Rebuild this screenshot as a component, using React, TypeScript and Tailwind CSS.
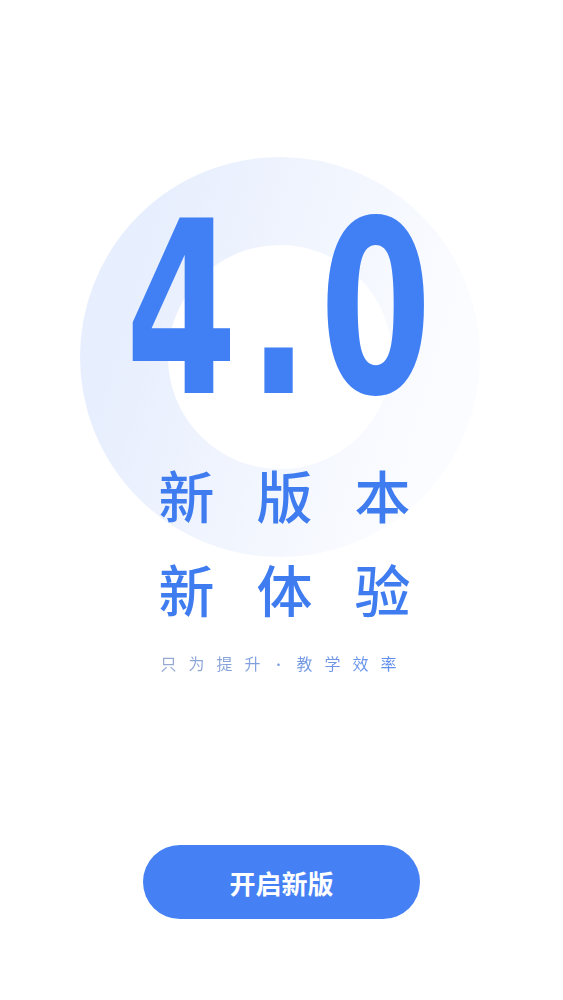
import React from 'react';

// 背景圆环：左侧偏蓝，向右渐隐
const Ring: React.FC = () => (
  <svg className="absolute left-[80px] top-[157px]" width="400" height="400" viewBox="0 0 400 400">
    <defs>
      <linearGradient id="ringGrad" x1="0" y1="0.35" x2="1" y2="0.65">
        <stop offset="0" stopColor="#e7eefd" />
        <stop offset="0.55" stopColor="#f2f6fe" />
        <stop offset="1" stopColor="#fbfcff" />
      </linearGradient>
    </defs>
    <circle cx="200" cy="200" r="156" fill="none" stroke="url(#ringGrad)" strokeWidth="88" />
  </svg>
);

const App: React.FC = () => {
  return (
    <div
      className="relative w-full h-[1000px] bg-white overflow-hidden"
      style={{ fontFamily: '"Noto Sans CJK SC", "Liberation Sans", sans-serif' }}
    >
      <Ring />

      <div className="relative flex flex-col items-center pt-[190px]">
        {/* 4.0 */}
        <div className="h-[240px] w-[310px] flex justify-center pr-[6px]">
          <span
            className="block h-[240px] leading-[240px] text-[240px] font-bold text-[#4080f4] whitespace-nowrap tracking-[16px] pl-[16px] scale-x-[0.67] origin-center"
            style={{ fontFamily: '"DejaVu Sans", sans-serif' }}
          >
            4.0
          </span>
        </div>

        {/* 新版本 / 新体验 */}
        <div className="mt-[36px] flex flex-col items-center gap-[38px] text-[56px] leading-[56px] font-medium text-[#3f7cf0]">
          <div className="flex gap-[42px] pl-[6px]">
            <span>新</span>
            <span>版</span>
            <span>本</span>
          </div>
          <div className="flex gap-[42px] pl-[6px]">
            <span>新</span>
            <span>体</span>
            <span>验</span>
          </div>
        </div>

        {/* 副标题 */}
        <div className="mt-[37px] text-[16px] leading-[20px] tracking-[12px] pl-[6px] bg-gradient-to-r from-[#97aad0] to-[#5b8cf0] bg-clip-text text-transparent">
          只为提升<span className="text-[12px]">·</span>教学效率
        </div>

        {/* 按钮 */}
        <button className="mt-[170px] w-[277px] h-[74px] rounded-full bg-[#4581f5] text-white text-[26px] font-bold flex items-center justify-center">
          开启新版
        </button>
      </div>
    </div>
  );
};

export default App;
